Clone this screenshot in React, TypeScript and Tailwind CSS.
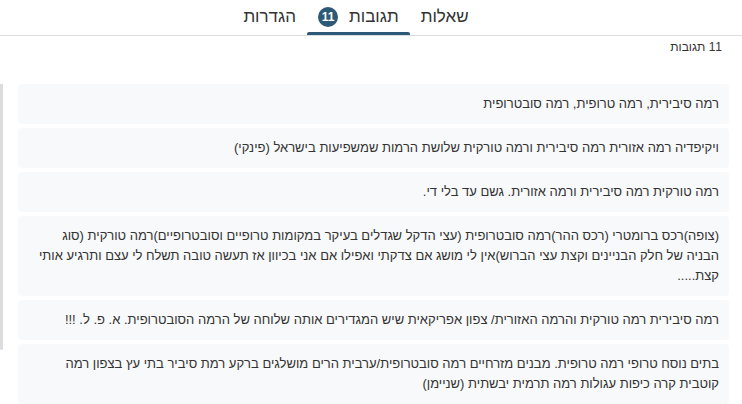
const responses: string[] = [
  "רמה סיבירית, רמה טרופית, רמה סובטרופית",
  "ויקיפדיה רמה אזורית רמה סיבירית ורמה טורקית שלושת הרמות שמשפיעות בישראל (פינקי)",
  "רמה טורקית רמה סיבירית ורמה אזורית. גשם עד בלי די.",
  "(צופה)רכס ברומטרי (רכס ההר)רמה סובטרופית (עצי הדקל שגדלים בעיקר במקומות טרופיים וסובטרופיים)רמה טורקית (סוג הבניה של חלק הבניינים וקצת עצי הברוש)אין לי מושג אם צדקתי ואפילו אם אני בכיוון אז תעשה טובה תשלח לי עצם ותרגיע אותי קצת.....",
  "רמה סיבירית רמה טורקית והרמה האזורית/ צפון אפריקאית שיש המגדירים אותה שלוחה של הרמה הסובטרופית. א. פ. ל. !!!",
  "בתים נוסח טרופי רמה טרופית. מבנים מזרחיים רמה סובטרופית/ערבית הרים מושלגים ברקע רמת סיביר בתי עץ בצפון רמה קוטבית קרה כיפות עגולות רמה תרמית יבשתית (שניימן)",
];

function Tabs() {
  return (
    <div className="h-[36px] border-b border-[#dadce0] flex justify-center pr-[30px] text-[17px]">
      <div className="px-[11px] flex items-center pb-[2px]">שאלות</div>
      <div className="relative px-[11px] flex items-center gap-[11px] pb-[2px]">
        <span>תגובות</span>
        <span className="w-[20px] h-[20px] rounded-full bg-[#2c5a76] text-white text-[12px] font-bold flex items-center justify-center leading-none">
          11
        </span>
        <span className="absolute bottom-0 left-0 right-0 h-[3px] rounded-t-[2px] bg-[#2c5a76]" />
      </div>
      <div className="px-[11px] flex items-center pb-[2px]">הגדרות</div>
    </div>
  );
}

export default function App() {
  return (
    <div
      dir="rtl"
      className="w-[742px] h-[404px] overflow-hidden bg-white text-[#333333] font-['Liberation_Sans',Arial,sans-serif]"
    >
      <Tabs />
      <div className="pr-[20px] pt-[1px] text-[12px] leading-[20px]">11 תגובות</div>
      <div className="flex mt-[27px]">
        <div className="flex-1 flex flex-col gap-[4px] mr-[13px]">
          {responses.map((r, i) => (
            <div
              key={i}
              className="bg-[#f8f9fa] rounded-[4px] px-[10px] py-[10px] text-[13px] leading-[20px]"
            >
              {r}
            </div>
          ))}
        </div>
        <div className="w-[3px] h-[266px] bg-[#dadce0] rounded-b-[2px] mr-[15px] shrink-0" />
      </div>
    </div>
  );
}
